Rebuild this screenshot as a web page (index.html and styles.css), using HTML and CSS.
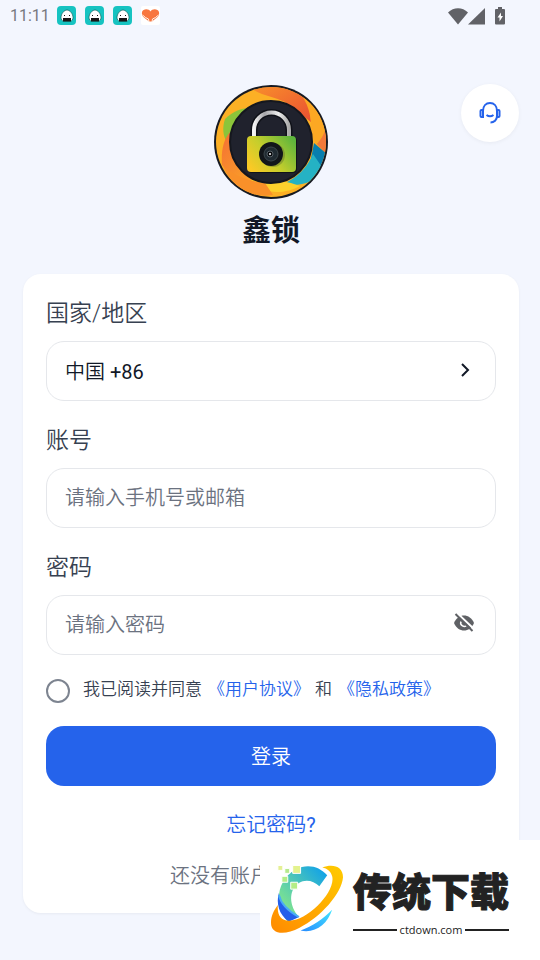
FILE: index.html
```html
<!DOCTYPE html>
<html lang="zh-CN">
  <head>
    <meta charset="UTF-8" />
    <meta name="viewport" content="width=device-width, initial-scale=1.0" />
    <title>鑫锁</title>
    <link rel="stylesheet" href="styles.css">
  </head>
  <body>
    <!-- icons used more than once -->
    <svg class="sprite" aria-hidden="true">
      <symbol id="rice" viewBox="0 0 19 19">
        <rect width="19" height="19" rx="4" fill="#16c3c1" />
        <path d="M10 4C7 4 4 8 4 11.500c0 2 1 3.500 2.500 3.500h7c1.500 0 2.500-1.500 2.500-3.500C16 8 13 4 10 4z" fill="#fff" stroke="#15605f" stroke-width=".7" />
        <path d="M6 12h8v3.500H6z" fill="#161616" />
        <path d="M7 9h1v1H7zM12 9h1v1h-1z" fill="#161616" />
      </symbol>
    </svg>

    <div class="status-bar">
      <span class="time">11:11</span>
      <div class="notices">
        <svg width="19" height="19"><use href="#rice" /></svg>
        <svg width="19" height="19"><use href="#rice" /></svg>
        <svg width="19" height="19"><use href="#rice" /></svg>
        <svg width="19" height="19" viewBox="0 0 19 19">
          <rect width="19" height="19" rx="2" fill="#fff" />
          <path d="M9.500 5.500C8 2.500 2 2.500 1 6c-.5 2.500.5 4.500 2 5.500l5 4h3l5-4c1.500-1 2.500-3 2-5.500-1-3.500-7-3.500-8.500-.5z" fill="#f8763f" />
          <path d="M1.500 9l3 2.500 3 1.500.5 3M17.500 9l-3 2.500-3 1.500-.5 3" fill="none" stroke="#fff1e8" />
        </svg>
      </div>
      <div class="signals">
        <svg width="20" height="18" viewBox="0 0 20 18">
          <path d="M0 5.500C5.500-.2 14.500-.2 20 5.500L10 17.500z" />
        </svg>
        <svg width="17" height="18" viewBox="0 0 17 18">
          <path d="M17 1v16.500H0z" />
        </svg>
        <svg class="battery" width="10" height="18" viewBox="0 0 10 18">
          <path d="M3 0h4v2h2a1 1 0 0 1 1 1v13.500a1 1 0 0 1-1 1H1a1 1 0 0 1-1-1V3a1 1 0 0 1 1-1h2z" />
          <path d="M6 5.500L2.500 10.500h2v4L8 9H6z" fill="#fff" />
        </svg>
      </div>
    </div>

    <header class="header">
      <div class="brand">
        <svg class="logo" viewBox="0 0 116 116" aria-hidden="true">
          <defs>
            <linearGradient id="lockBody" x1="0" y1=".8" x2="1" y2=".2">
              <stop offset="0" stop-color="#fcc925" />
              <stop offset=".45" stop-color="#c5ce2c" />
              <stop offset="1" stop-color="#5eb53c" />
            </linearGradient>
            <linearGradient id="shackle" x1="0" y1="0" x2="1" y2="0">
              <stop offset="0" stop-color="#f4f4f4" />
              <stop offset=".3" stop-color="#a6a6aa" />
              <stop offset=".7" stop-color="#eee" />
              <stop offset="1" stop-color="#aaa" />
            </linearGradient>
            <linearGradient id="flame" x1="0" y1="0" x2="1" y2="1">
              <stop offset="0" stop-color="#f9912b" />
              <stop offset="1" stop-color="#e94f32" />
            </linearGradient>
            <linearGradient id="amber" x1="0" y1="0" x2="1" y2="1">
              <stop offset="0" stop-color="#f46f34" />
              <stop offset="1" stop-color="#fcae25" />
            </linearGradient>
            <clipPath id="disc"><circle cx="58" cy="58" r="55" /></clipPath>
          </defs>
          <circle cx="58" cy="58" r="57" fill="#171a22" />
          <g clip-path="url(#disc)">
            <rect width="116" height="116" fill="#fcb025" />
            <path d="M39 5C58-3 80 0 92 14c5 7 5 16 6 24L72 18C62 13 50 12 39 5z" fill="url(#flame)" />
            <path d="M86 8c20 8 30 28 29 48l-8 15-9-22c1-15-2-29-12-41z" fill="#fca823" />
            <path d="M115 36v36l-11-12c6-7 9-14 11-24z" fill="#f2793a" />
            <path d="M101 59l14 12-5 18-13-9z" fill="#087eae" />
            <path d="M100 70l11 16C101 99 87 103 70 100c14-6 24-16 30-30z" fill="#25b2c4" />
            <path d="M12 35c8-8 17-11 26-11L14 58c-4-6-5-14-2-23z" fill="#8bc53a" />
            <path d="M17 48c-7 8-9 20-8 33 12 16 27 19 45 19C34 91 15 76 17 48z" fill="url(#amber)" />
            <path d="M38 96c16-2 33 0 49 6-14 8-38 10-49-6z" fill="#fdd02c" />
            <path d="M10 83c12 8 24 14 42 16l8 12c-20 4-40-7-50-28z" fill="#f99029" />
          </g>
          <circle cx="58" cy="58" r="41" fill="#20222d" stroke="#15171e" stroke-width="2" />
          <path d="M41 54V46a17 17 0 0 1 35 0v8" fill="none" stroke="#0f1118" stroke-width="7" />
          <path d="M41 54V46a17 17 0 0 1 35 0v8" fill="none" stroke="url(#shackle)" stroke-width="4" />
          <rect x="35" y="53" width="49" height="36" rx="4" fill="#101319" />
          <rect x="34" y="52" width="49" height="36" rx="4" fill="url(#lockBody)" />
          <circle cx="60" cy="71" r="12" fill="#77852d" opacity=".6" />
          <circle cx="58" cy="70" r="12" fill="#12161a" />
          <circle cx="58" cy="70" r="7" fill="#202b32" stroke="#3d474c" />
          <circle cx="57" cy="70" r="3" fill="#07090c" stroke="#555f65" />
          <circle cx="57" cy="70" r="1" fill="#fff" />
        </svg>
        <h1>鑫锁</h1>
      </div>
      <button class="support" type="button" aria-label="客服">
        <svg width="24" height="24" viewBox="0 0 24 24" fill="none" stroke="#2563eb" stroke-width="2">
          <path d="M5 9v7H3.500A1 1 0 0 1 2.500 15v-5A1 1 0 0 1 3.500 9zM19 9v7h1.500a1 1 0 0 0 1-1v-5a1 1 0 0 0-1-1z" />
          <path d="M5 10C5 5 8 2 12 2s7 3 7 8v5c0 4-3 6.500-6.500 6.500" />
          <path d="M8.500 14c2 1.500 5 1.500 7 0" />
        </svg>
      </button>
    </header>

    <form class="card" onsubmit="return false">
      <label class="label" for="region">国家/地区</label>
      <button class="field region" id="region" type="button">
        <span>中国 <span class="latin">+86</span></span>
        <svg width="20" height="20" viewBox="0 0 20 20" fill="none" stroke="#111827" stroke-width="2">
          <path d="M7 4l6 6-6 6" />
        </svg>
      </button>

      <label class="label" for="account">账号</label>
      <div class="field">
        <input type="text" id="account" placeholder="请输入手机号或邮箱" />
      </div>

      <label class="label" for="password">密码</label>
      <div class="field">
        <input type="password" id="password" placeholder="请输入密码" />
        <button class="eye" id="toggleEye" type="button" aria-label="显示密码">
          <svg width="22" height="22" viewBox="0 0 22 22">
            <path d="M1 11c2-5 6-7.500 10-7.500S19 6 21 11c-2 5-6 7.500-10 7.500S3 16 1 11z" fill="#5f6165" />
            <path d="M8 9.500a3.500 3.500 0 0 0 6 3.500" fill="none" stroke="#fff" stroke-width="1.500" />
            <path d="M4 1L21.500 17.500" stroke="#fff" stroke-width="2" />
            <path d="M2.500 2L19.500 19" stroke="#5f6165" stroke-width="2" />
          </svg>
        </button>
      </div>

      <div class="agree">
        <input type="checkbox" id="agree" />
        <label for="agree">我已阅读并同意</label>
        <a href="#">《用户协议》</a>
        <span>和</span>
        <a href="#">《隐私政策》</a>
      </div>

      <button class="login" type="submit">登录</button>
      <a class="forgot" href="#">忘记密码<span class="latin">?</span></a>
      <p class="register">还没有账户</p>
    </form>

    <aside class="site-mark">
      <svg class="mark-logo" width="76" height="72" viewBox="0 0 76 72" aria-hidden="true">
        <defs>
          <linearGradient id="ring" x1="0" y1="1" x2="1" y2="0">
            <stop offset="0" stop-color="#ff8a00" />
            <stop offset="1" stop-color="#ffcb00" />
          </linearGradient>
          <linearGradient id="arc" x1="0" y1="1" x2="1" y2="0">
            <stop offset="0" stop-color="#9af278" />
            <stop offset=".35" stop-color="#68d6a2" />
            <stop offset="1" stop-color="#079cf0" />
          </linearGradient>
          <linearGradient id="tail" x1="0" y1="1" x2="1" y2="0">
            <stop offset="0" stop-color="#278cff" />
            <stop offset="1" stop-color="#42e5ff" />
          </linearGradient>
        </defs>
        <path d="M26 5c12-6 24-3 32 6l-8 11C42 14 29 14 23 26c-4 10 0 20 6 27l-11 5C4 42 6 16 26 5z" fill="url(#arc)" />
        <path d="M9 29c1 10 8 19 21 24l-11 5C9 51 6 39 9 29z" fill="#245fea" />
        <path d="M9 31c2 9 11 17 20 22" fill="none" stroke="#4bacf5" stroke-width="2" />
        <path d="M31 67c12-4 23-12 32-21-5 15-17 24-32 21z" fill="url(#tail)" />
        <path d="M53 3c11-4 21-1 21 10C73 29 51 54 30 64 15 72 1 71 1 59c0-7 3-13 7-18-1 10 3 16 11 16C37 58 67 28 63 12 62 7 58 4 53 3z" fill="url(#ring)" />
        <g stroke="#fff">
          <path d="M23 1h8v8h-8z" fill="#e3f28d" />
          <path d="M15 4h5v5h-5z" fill="#b5e98c" />
          <path d="M12 12h6v6h-6zM21 18h7v7h-7z" fill="#b4ed87" />
          <path d="M8 1h5v5H8z" fill="#e5f094" />
        </g>
      </svg>
      <div class="mark-text">
        <strong>传统下载</strong>
        <span class="mark-url">ctdown.com</span>
      </div>
    </aside>

    <script>
      document.getElementById("toggleEye").onclick = function () {
        let input = document.getElementById("password");
        input.type = input.type === "password" ? "text" : "password";
      };
    </script>
  </body>
</html>
```
FILE: styles.css
```css
* {
  box-sizing: border-box;
}
body {
  margin: 0;
  min-height: 100vh;
  background: #f3f6fe;
  color: #111827;
  font-family: Roboto, "Noto Sans CJK SC", sans-serif;
  font-size: 20px;
  font-weight: 350;
}
svg {
  display: block;
}
button,
input {
  font: inherit;
  color: inherit;
}
button {
  border: none;
  padding: 0;
  cursor: pointer;
}
a {
  color: #2563eb;
  text-decoration: none;
}
.sprite {
  position: absolute;
  width: 0;
  height: 0;
}
.latin {
  font-weight: 400;
}

/* status bar */
.status-bar {
  display: flex;
  align-items: center;
  height: 31px;
  padding: 0 35px 0 10px;
  color: #77797e;
}
.time {
  font-size: 16px;
  font-weight: 400;
}
.notices {
  display: flex;
  gap: 9px;
  margin-left: 7px;
}
.signals {
  display: flex;
  align-items: center;
  margin-left: auto;
  fill: #616267;
}
.battery {
  margin-left: 10px;
}

/* logo and support button */
.header {
  display: grid;
  grid-template-columns: 1fr auto 1fr;
  align-items: start;
  padding: 53px 21px 0 23px;
}
.brand {
  grid-column: 2;
  text-align: center;
}
.logo {
  width: 116px;
  height: 116px;
}
h1 {
  margin: 11px 0 0;
  font-size: 29px;
  line-height: 40px;
  font-weight: 700;
}
.support {
  display: grid;
  place-items: center;
  justify-self: end;
  width: 58px;
  height: 58px;
  border-radius: 50%;
  background: #fff;
  box-shadow: 0 1px 4px rgba(0, 0, 0, 0.05);
}

/* login form */
.card {
  display: flex;
  flex-direction: column;
  margin: 23px 21px 0 23px;
  padding: 24px 23px 22px;
  border-radius: 18px;
  background: #fff;
  box-shadow: 0 1px 3px rgba(0, 0, 0, 0.05);
}
.label {
  margin-bottom: 11px;
  font-size: 23px;
  line-height: 32px;
  color: #374151;
}
.field {
  display: flex;
  align-items: center;
  justify-content: space-between;
  height: 60px;
  margin-bottom: 24px;
  padding: 0 20px 0 18px;
  border: 1px solid #e5e7eb;
  border-radius: 18px;
  background: #fff;
}
.region {
  padding-bottom: 2px;
}
.field input {
  flex: 1;
  min-width: 0;
  padding: 0;
  border: none;
  outline: none;
  background: none;
}
.field input::placeholder {
  color: #6b7280;
}
.eye {
  padding-bottom: 4px;
  background: none;
}
.agree {
  display: flex;
  height: 24px;
  margin-bottom: 23px;
  font-size: 17px;
  line-height: 20px;
  color: #374151;
}
.agree input {
  appearance: none;
  width: 24px;
  height: 24px;
  margin: 0 13px 0 0;
  border: 2px solid #7d8490;
  border-radius: 50%;
}
.agree input:checked {
  background: #2563eb;
}
.agree a {
  margin: 0 5px 0 6px;
}
.login {
  height: 60px;
  padding-bottom: 2px;
  border-radius: 18px;
  background: #2563eb;
  color: #fff;
}
.forgot {
  align-self: center;
  margin-top: 24px;
  line-height: 30px;
}
.register {
  align-self: center;
  width: 202px;
  margin: 21px 0 0;
  line-height: 30px;
  color: #6b7280;
}

/* site mark over the bottom corner */
.site-mark {
  position: fixed;
  right: 0;
  bottom: 0;
  display: flex;
  align-items: center;
  gap: 8px;
  width: 280px;
  height: 120px;
  padding: 0 31px 0 10px;
  background: #fff;
}
.mark-text {
  flex: 1;
  padding-top: 4px;
  color: #222;
}
.mark-text strong {
  display: block;
  font-size: 39px;
  line-height: 52px;
  font-weight: 900;
  white-space: nowrap;
  -webkit-text-stroke: 1px #222;
}
.mark-url {
  display: flex;
  align-items: center;
  gap: 3px;
  margin-top: 3px;
  font: 500 11px/16px "Open Sans", sans-serif;
}
.mark-url::before,
.mark-url::after {
  content: "";
  flex: 1;
  height: 2px;
  background: #222;
}
```
